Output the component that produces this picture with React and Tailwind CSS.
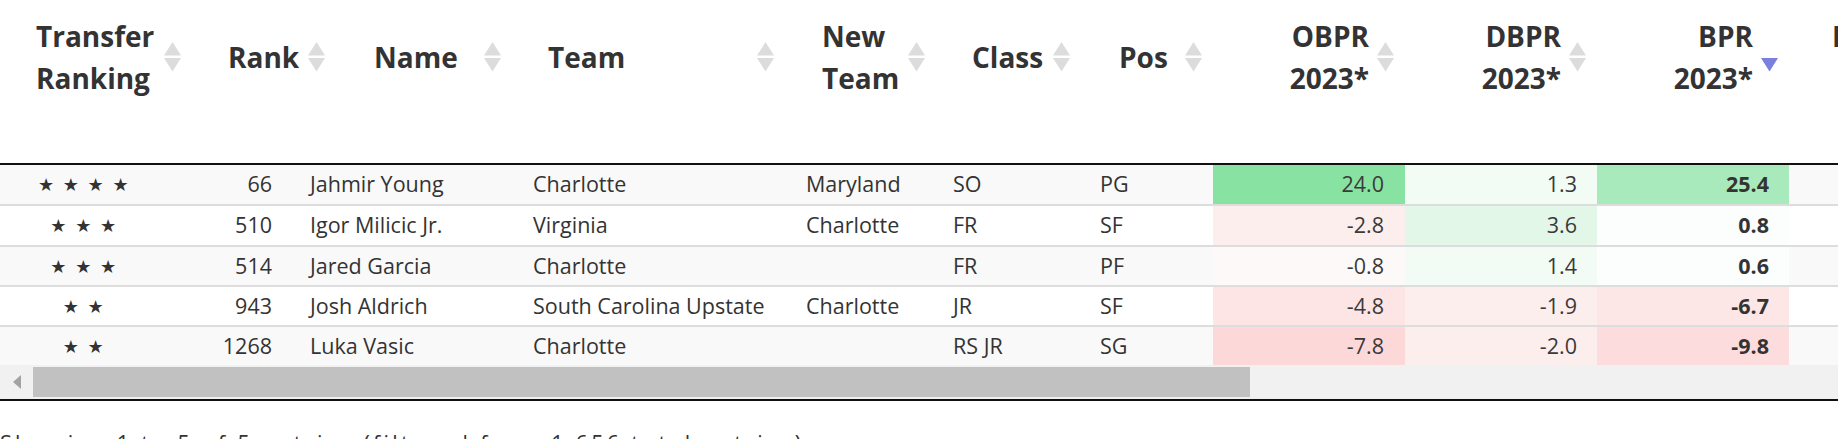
import React from "react";

const SortBoth = () => (
  <svg width="17" height="30" viewBox="0 0 17 30" className="shrink-0">
    <path d="M8.5 0 L17 13.5 L0 13.5 Z" fill="#dcdcdc" />
    <path d="M0 16 L17 16 L8.5 29.5 Z" fill="#dcdcdc" />
  </svg>
);

const SortDesc = () => (
  <svg width="17" height="30" viewBox="0 0 17 30" className="shrink-0">
    <path d="M0 16 L17 16 L8.5 29.5 Z" fill="#7a80dd" />
  </svg>
);

const headLeft = [
  { w: "w-[191px]", pl: "pl-[36px]", label: ["Transfer", "Ranking"] },
  { w: "w-[144px]", pl: "pl-[37px]", label: ["Rank"] },
  { w: "w-[176px]", pl: "pl-[39px]", label: ["Name"] },
  { w: "w-[273px]", pl: "pl-[37px]", label: ["Team"] },
  { w: "w-[151px]", pl: "pl-[38px]", label: ["New", "Team"] },
  { w: "w-[145px]", pl: "pl-[37px]", label: ["Class"] },
  { w: "w-[132px]", pl: "pl-[39px]", label: ["Pos"] },
];

const rows = [
  { stars: "★ ★ ★ ★", rank: "66", name: "Jahmir Young", team: "Charlotte", newTeam: "Maryland", cls: "SO", pos: "PG", o: "24.0", d: "1.3", b: "25.4", oc: "bg-[#88e2a1]", dc: "bg-[#f3fbf5]", bc: "bg-[#a8eabb]", h: "h-[39px]", bg: "bg-[#f9f9f9]" },
  { stars: "★ ★ ★", rank: "510", name: "Igor Milicic Jr.", team: "Virginia", newTeam: "Charlotte", cls: "FR", pos: "SF", o: "-2.8", d: "3.6", b: "0.8", oc: "bg-[#fdeeee]", dc: "bg-[#e3f7e9]", bc: "bg-[#fbfefc]", h: "h-[39px]", bg: "bg-white" },
  { stars: "★ ★ ★", rank: "514", name: "Jared Garcia", team: "Charlotte", newTeam: "", cls: "FR", pos: "PF", o: "-0.8", d: "1.4", b: "0.6", oc: "bg-[#fef9f9]", dc: "bg-[#f3fbf5]", bc: "bg-[#fbfefc]", h: "h-[38px]", bg: "bg-[#f9f9f9]" },
  { stars: "★ ★", rank: "943", name: "Josh Aldrich", team: "South Carolina Upstate", newTeam: "Charlotte", cls: "JR", pos: "SF", o: "-4.8", d: "-1.9", b: "-6.7", oc: "bg-[#fde5e5]", dc: "bg-[#fdeeee]", bc: "bg-[#fde6e6]", h: "h-[38px]", bg: "bg-white" },
  { stars: "★ ★", rank: "1268", name: "Luka Vasic", team: "Charlotte", newTeam: "", cls: "RS JR", pos: "SG", o: "-7.8", d: "-2.0", b: "-9.8", oc: "bg-[#fcd8d9]", dc: "bg-[#fdeeee]", bc: "bg-[#fcdcdd]", h: "h-[38px]", bg: "bg-[#f9f9f9]" },
];

export default function App() {
  return (
    <div className="w-[1838px] h-[439px] overflow-hidden bg-white text-[#333] font-['Open_Sans',sans-serif]">
      {/* header */}
      <div className="flex h-[163px] items-start whitespace-nowrap text-[28px] font-bold leading-[42px]">
        {headLeft.map((c, i) => (
          <div key={i} className={`${c.w} ${c.pl} shrink-0 mt-[15px] h-[84px] flex items-center justify-between pr-[10px]`}>
            <div>
              {c.label.map((l, j) => (
                <div key={j}>{l}</div>
              ))}
            </div>
            <SortBoth />
          </div>
        ))}
        {[
          { l: ["OBPR", "2023*"], desc: false },
          { l: ["DBPR", "2023*"], desc: false },
          { l: ["BPR", "2023*"], desc: true },
        ].map((c, i) => (
          <div key={i} className="w-[192px] shrink-0 mt-[15px] h-[84px] flex items-center justify-end gap-[8px] pr-[10px]">
            <div className="text-right">
              {c.l.map((l, j) => (
                <div key={j}>{l}</div>
              ))}
            </div>
            {c.desc ? <SortDesc /> : <SortBoth />}
          </div>
        ))}
        <div className="shrink-0 mt-[15px] pl-[44px]">
          <div>Height</div>
        </div>
      </div>
      <div className="h-[2px] bg-[#111]" />

      {/* body */}
      <div className="text-[21.5px] whitespace-nowrap">
        {rows.map((r, i) => (
          <div key={i} className={`flex ${r.h} ${r.bg} ${i > 0 ? "border-t-2 border-[#dddddd]" : ""} box-content`}>
            <div className="w-[168px] shrink-0 flex items-center justify-center font-['DejaVu_Sans',sans-serif] text-[18px] tracking-[1.5px]">{r.stars}</div>
            <div className="w-[127px] shrink-0 flex items-center justify-end pr-[23px]">{r.rank}</div>
            <div className="w-[223px] shrink-0 flex items-center pl-[15px]">{r.name}</div>
            <div className="w-[273px] shrink-0 flex items-center pl-[15px]">{r.team}</div>
            <div className="w-[147px] shrink-0 flex items-center pl-[15px]">{r.newTeam}</div>
            <div className="w-[147px] shrink-0 flex items-center pl-[15px]">{r.cls}</div>
            <div className="w-[128px] shrink-0 flex items-center pl-[15px]">{r.pos}</div>
            <div className={`w-[192px] shrink-0 flex items-center justify-end pr-[21px] text-[#3a3a3a] ${r.oc}`}>{r.o}</div>
            <div className={`w-[192px] shrink-0 flex items-center justify-end pr-[20px] text-[#3a3a3a] ${r.dc}`}>{r.d}</div>
            <div className={`w-[192px] shrink-0 flex items-center justify-end pr-[20px] font-bold ${r.bc}`}>{r.b}</div>
            <div className="flex-1" />
          </div>
        ))}
      </div>

      {/* horizontal scrollbar */}
      <div className="flex h-[34px] items-center bg-[#f1f1f1]">
        <div className="w-[33px] h-full flex items-center justify-center shrink-0">
          <svg width="8" height="14" viewBox="0 0 8 14">
            <path d="M8 0 L0 7 L8 14 Z" fill="#a3a3a3" />
          </svg>
        </div>
        <div className="w-[1217px] h-[30px] bg-[#c1c1c1]" />
      </div>
      <div className="h-[2px] bg-[#111]" />

      {/* footer */}
      <div className="mt-[26px] text-[21.5px] leading-[31px] tracking-[3.3px] whitespace-nowrap">
        Showing 1 to 5 of 5 entries (filtered from 1,656 total entries)
      </div>
    </div>
  );
}
